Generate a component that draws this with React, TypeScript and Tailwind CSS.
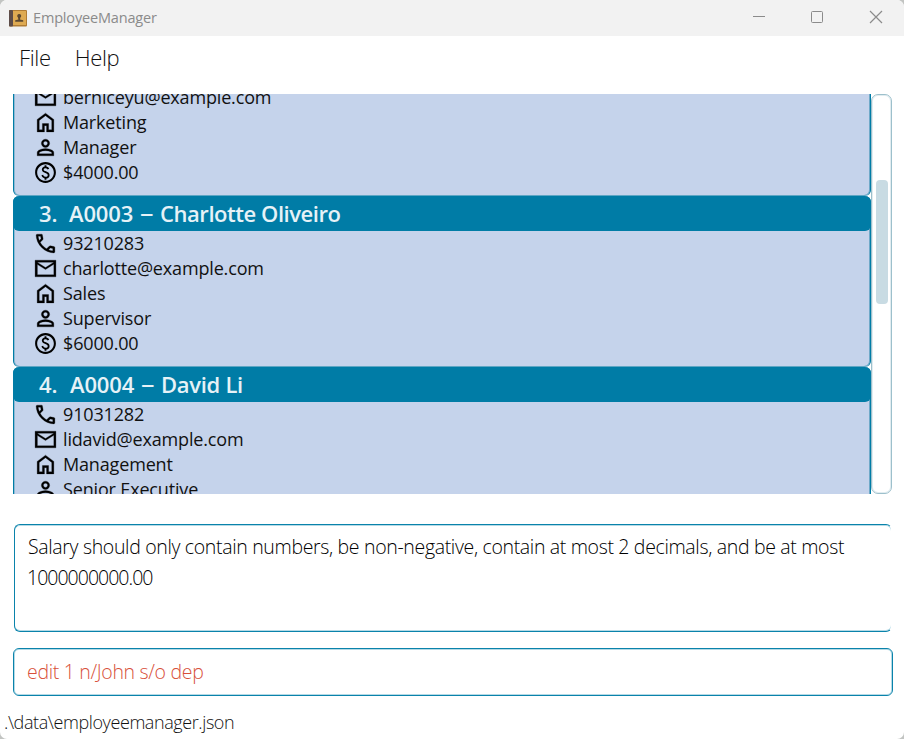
import type { ReactNode } from "react";
import { MdOutlinePaid } from "react-icons/md";

function Glyph({ d, className = "" }: { d: string; className?: string }) {
  return (
    <svg viewBox="0 -960 960 960" className={`size-[25px] shrink-0 ${className}`} fill="currentColor" stroke="currentColor" strokeWidth="10">
      <path d={d} />
    </svg>
  );
}

const phonePath =
  "M798-120q-125 0-247-54.5T329-329Q229-429 174.500-551T120-798q0-18 12-30t30-12h162q14 0 25 9.500t13 22.500l26 140q2 16-1 27t-11 19l-97 98q20 37 47.500 71.500T387-386q31 31 65 57.500t72 48.500l94-94q9-9 23.500-13.500T670-390l138 28q14 4 23 14.500t9 23.500v162q0 18-12 30t-30 12ZM241-600l66-66-17-94h-89q5 41 14 81t26 79Zm358 358q39 17 79.500 27t81.500 13v-88l-94-19-67 67Z";
const mailPath =
  "M80-160v-640h800v640H80Zm400-280L160-640v400h640v-400L480-440Zm0-80 320-200H160l320 200ZM160-640v-80 480-400Z";
const homePath = "M240-200h120v-240h240v240h120v-360L480-740 240-560v360Zm-80 80v-480l320-240 320 240v480H520v-240h-80v240H160Z";
const personPath =
  "M480-480q-66 0-113-47t-47-113q0-66 47-113t113-47q66 0 113 47t47 113q0 66-47 113t-113 47ZM160-160v-112q0-34 17.500-62.500T224-378q62-31 126-46.500T480-440q66 0 130 15.500T736-378q29 15 46.500 43.500T800-272v112H160Zm80-80h480v-32q0-11-5.500-20T700-306q-54-27-109-40.500T480-360q-56 0-111 13.500T260-306q-9 5-14.500 14t-5.500 20v32Zm240-320q33 0 56.500-23.500T560-640q0-33-23.500-56.500T480-720q-33 0-56.500 23.500T400-640q0 33 23.500 56.500T480-560Z";

function Row({ icon, children }: { icon: ReactNode; children: ReactNode }) {
  return (
    <div className="flex h-[25px] items-center gap-[5px] pl-[19px] text-black">
      {icon}
      <span className="text-[18px] leading-[25px] tracking-[-0.16px] whitespace-pre text-[#111]">{children}</span>
    </div>
  );
}

type Employee = {
  index?: string;
  id?: string;
  name?: string;
  phone?: string;
  email: string;
  department: string;
  role: string;
  salary?: string;
};

// Only the fields inside the scrolled viewport are rendered.
const employees: Employee[] = [
  { email: "berniceyu@example.com", department: "Marketing", role: "Manager", salary: "$4000.00" },
  { index: "3.", id: "A0003", name: "Charlotte Oliveiro", phone: "93210283", email: "charlotte@example.com", department: "Sales", role: "Supervisor", salary: "$6000.00" },
  { index: "4.", id: "A0004", name: "David Li", phone: "91031282", email: "lidavid@example.com", department: "Management", role: "Senior Executive" },
];

function Card({ e }: { e: Employee }) {
  return (
    <div className={`${e.name ? "h-[171px] rounded-[6px]" : "h-[111px] rounded-b-[6px]"} shrink-0 border-x border-b border-x-[#007ca6] border-b-[#5ea6c4] bg-[#c5d3eb] shadow-[inset_1px_0_0_#8fb9d3,inset_-1px_0_0_#6fa9c8]`}>
      {e.name && (
        <div className="-mx-px flex h-[35px] items-center rounded-[6px] bg-[#007ca6] pl-[26px] text-[22px] leading-[35px] font-semibold whitespace-pre text-[#e6f2f7]">
          <span className={e.index === "4." ? "w-[31px]" : "w-[30px]"}>{e.index}</span>
          <span className="w-[71px] tracking-[-0.15px]">{e.id}</span>
          <span className="-mt-[5px] w-[20px] text-[27px] leading-[35px] font-normal">–</span>
          <span className={e.index === "4." ? "tracking-[-0.3px]" : "tracking-[-0.45px]"}>{e.name}</span>
        </div>
      )}
      {e.phone && <Row icon={<Glyph d={phonePath} className="-ml-[0.5px] mr-[0.5px]" />}>{e.phone}</Row>}
      <Row icon={<Glyph d={mailPath} />}>{e.email}</Row>
      <Row icon={<Glyph d={homePath} />}>{e.department}</Row>
      <Row icon={<Glyph d={personPath} />}>{e.role}</Row>
      {e.salary && <Row icon={<MdOutlinePaid size={25} />}>{e.salary}</Row>}
    </div>
  );
}

export default function App() {
  return (
    <div className="h-[739px] w-[904px] bg-[#c2c4c2]">
      <div className="flex h-[739px] flex-col overflow-hidden rounded-[7px] bg-white font-['Open_Sans','Noto_Sans',sans-serif]">
        <header className="flex h-9 shrink-0 items-center bg-[#f2f2f2] pl-[9px] text-[#8b8b8b]">
          <svg width="18" height="17" viewBox="0 0 18 17">
            <rect width="18" height="16.5" rx="1" fill="#b07c34" />
            <rect x="4" y="1" width="13" height="14" fill="#deaa52" />
            <rect width="4" height="16.5" rx="1" fill="#5d4c49" />
            <path d="M10.200 4a2 2 0 0 1 1.200 3.600l-.4 2 3.200.6v1.600h-8v-1.600l3.200-.6-.4-2A2 2 0 0 1 10.200 4Z" fill="#5c4830" />
          </svg>
          <span className="ml-[6px] text-[14.5px] tracking-[-0.17px]">EmployeeManager</span>
          <svg className="ml-auto" width="151" height="36" viewBox="0 0 151 36" fill="none" stroke="#8b8b8b">
            <path d="M0 16.500h12" />
            <path d="M117 11l12 12M129 11l-12 12" strokeWidth="1.200" />
            <rect x="58.500" y="11.500" width="11" height="11" rx="1" />
          </svg>
        </header>
        <nav className="flex h-[58px] shrink-0 gap-[24px] pt-[5px] pl-[19px] text-[22px] leading-[32px] font-light tracking-[-0.35px] text-[#111]">
          <span>File</span>
          <span>Help</span>
        </nav>
        <main className="flex h-[400px] shrink-0 pl-[13px]">
          <div className="w-[858px] overflow-hidden">
            <div className="-mt-[9px] flex flex-col">
              {employees.map((e) => (
                <Card key={e.email} e={e} />
              ))}
            </div>
          </div>
          <div className="h-[400px] w-[21px] rounded-[7px] border border-[#9dc0cc] pt-[85px] shadow-[inset_0_0_0_1px_#e1ecf0]">
            <div className="ml-[4px] h-[124px] w-[12px] rounded-[4px] bg-[#c8dbe3]" />
          </div>
        </main>
        <section className="mt-[30px] ml-[14px] h-[108px] w-[877px] shrink-0 overflow-hidden text-[19.5px] leading-[31px] font-light text-black">
          <div className="h-[108px] w-[878px] rounded-[6px] border border-[#0a83ab] border-r-transparent pt-[6px] pl-[13px] shadow-[inset_0_1px_0_#b5dae6,inset_0_-1px_0_#b5dae6]">
            <div className="tracking-[-0.34px] whitespace-pre">Salary should only contain numbers, be non-negative, contain at most 2 decimals, and be at most</div>
            <div className="-ml-px tracking-[-0.98px]">1000000000.00</div>
          </div>
        </section>
        <section className="mt-4 ml-[13px] flex h-12 w-[880px] shrink-0 items-center rounded-[6px] border border-[#0a83ab] pl-[13px] text-[19.5px] font-light tracking-[-0.32px] text-[#d8503a] shadow-[inset_0_0_0_1px_#b5dae6]">
          <span>edit 1 n/John s/o dep</span>
        </section>
        <footer className="flex h-[43px] items-center pt-[9px] pl-[4px] text-[18px] font-light tracking-[-0.41px] text-[#111]">
          <span>.\data\employeemanager.json</span>
        </footer>
      </div>
    </div>
  );
}
